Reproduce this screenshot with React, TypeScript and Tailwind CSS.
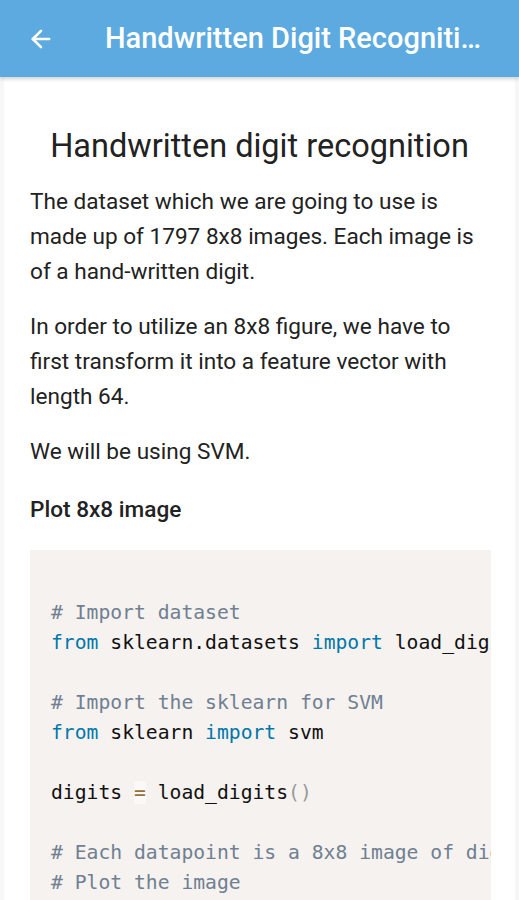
import { ArrowLeft } from "lucide-react";

const kw = "text-[#0077aa]";
const cm = "text-[#708090]";

export default function App() {
  return (
    <div className="min-h-screen bg-[#f7f7f7] font-['Roboto',sans-serif] text-[#212121]">
      {/* App bar */}
      <header className="h-[77px] bg-[#5caae0] flex items-center text-white shadow-[0_2px_4px_rgba(0,0,0,0.18)] relative z-10">
        <div className="w-[105px] shrink-0 pl-[27px] flex items-center">
          <ArrowLeft size={28} strokeWidth={2.2} />
        </div>
        <h1 className="w-[380px] text-[29px] font-medium truncate">Handwritten Digit Recognition</h1>
      </header>

      <main className="mx-[4px] bg-white min-h-[823px] overflow-hidden">
        <div className="px-[26px] pt-[49px]">
          <h2 className="text-[32.5px] leading-[40px] text-center text-[#222]">Handwritten digit recognition</h2>

          <div className="mt-[18px] text-[22.6px] leading-[35px] text-[#222] space-y-[20px]">
            <p>The dataset which we are going to use is made up of 1797 8x8 images. Each image is of a hand-written digit.</p>
            <p>In order to utilize an 8x8 figure, we have to first transform it into a feature vector with length 64.</p>
            <p>We will be using SVM.</p>
            <p className="font-medium !mt-[23px]">Plot 8x8 image</p>
          </div>

          <pre className="mt-[23px] mr-[-2px] bg-[#f5f2f0] overflow-hidden pl-[21px] pt-[18px] pb-[20px] font-['DejaVu_Sans_Mono',monospace] text-[19.7px] leading-[30px] text-[#111] whitespace-pre">
            {"\n"}
            <span className={cm}># Import dataset</span>{"\n"}
            <span className={kw}>from</span> sklearn.datasets <span className={kw}>import</span> load_digits{"\n"}
            {"\n"}
            <span className={cm}># Import the sklearn for SVM</span>{"\n"}
            <span className={kw}>from</span> sklearn <span className={kw}>import</span> svm{"\n"}
            {"\n"}
            digits <span className="text-[#9a6e3a] bg-white/50">=</span> load_digits<span className="text-[#999]">()</span>{"\n"}
            {"\n"}
            <span className={cm}># Each datapoint is a 8x8 image of digits</span>{"\n"}
            <span className={cm}># Plot the image</span>{"\n"}
          </pre>
        </div>
      </main>
    </div>
  );
}
